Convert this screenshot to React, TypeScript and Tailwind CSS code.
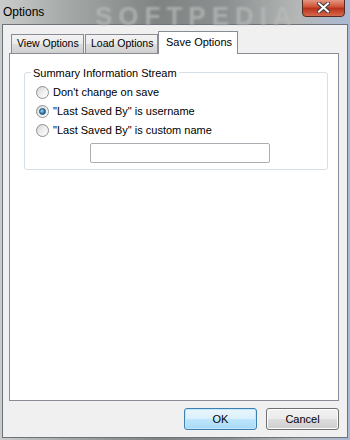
import { useState } from "react";

const font = { fontFamily: '"Liberation Sans", Arial, sans-serif' };

function Radio({ checked, label, onClick }: { checked: boolean; label: string; onClick: () => void }) {
  return (
    <button onClick={onClick} className="flex h-[19px] items-center gap-[4px] text-left">
      <span className="flex h-[13px] w-[13px] items-center justify-center rounded-full border border-[#8e8f8f] bg-gradient-to-br from-[#d4d4d4] via-[#eeeeee] to-[#ffffff]">
        {checked && (
          <span className="h-[7px] w-[7px] rounded-full border border-[#1e4f74] bg-[radial-gradient(circle_at_35%_35%,#9ad8f8,#2c79b0_60%,#1b4d74)]" />
        )}
      </span>
      <span className="text-[11px] text-black">{label}</span>
    </button>
  );
}

export default function App() {
  const [tab, setTab] = useState(2);
  const [mode, setMode] = useState(1);
  const tabs = ["View Options", "Load Options", "Save Options"];

  return (
    <div
      className="flex h-[440px] w-[350px] flex-col overflow-hidden bg-[linear-gradient(90deg,#c9cccb_0%,#a3a7a6_20%,#7f8483_45%,#8c9090_65%,#b4b7b6_85%,#a9b9d4_100%)]"
      style={font}
    >
      {/* Title bar */}
      <div className="relative flex h-[24px] shrink-0 items-center pl-[3px]">
        <span className="relative z-10 text-[12px] text-black">Options</span>
        <span className="pointer-events-none absolute left-[95px] top-[-3px] select-none text-[26px] font-bold tracking-[6px] text-[#b9bcbb] opacity-70 blur-[1px]">
          SOFTPEDIA
        </span>
        <button className="absolute right-[5px] top-[-2px] flex h-[19px] w-[43px] items-center justify-center rounded-b-[4px] border border-[#5a2a20] bg-[linear-gradient(180deg,#e8a08c_0%,#d0553a_45%,#b8321a_55%,#d46a4c_100%)]">
          <svg width="13" height="11" viewBox="0 0 13 11">
            <path d="M2 1.5 L11 9.5 M11 1.5 L2 9.5" stroke="#3b3b3b" strokeWidth="4" strokeLinecap="square" />
            <path d="M2 1.5 L11 9.5 M11 1.5 L2 9.5" stroke="#ffffff" strokeWidth="2" strokeLinecap="square" />
          </svg>
        </button>
      </div>

      {/* Client area */}
      <div className="mx-[2px] mb-[2px] flex flex-1 flex-col border border-[#6e737a] bg-[#f0f0f0] pl-[6px] pr-[8px] pt-[6px]">
        {/* Tabs */}
        <div className="flex h-[22px] items-end pl-[2px]">
          {tabs.map((t, i) =>
            i === tab ? (
              <button
                key={t}
                onClick={() => setTab(i)}
                className="relative z-10 mb-[-1px] -ml-[1px] flex h-[23px] w-[80px] items-start whitespace-nowrap border border-b-0 border-[#898c95] bg-white pl-[7px] pt-[2px] text-[11px] text-black"
              >
                {t}
              </button>
            ) : (
              <button
                key={t}
                onClick={() => setTab(i)}
                className="mr-[1px] flex h-[19px] w-[73px] items-center whitespace-nowrap border border-b-0 border-[#898c95] bg-[linear-gradient(180deg,#f3f3f3_0%,#ebebeb_50%,#dddddd_51%,#cfcfcf_100%)] pl-[5px] text-[10.5px] text-black"
              >
                {t}
              </button>
            )
          )}
        </div>

        {/* Panel */}
        <div className="flex h-[348px] flex-col border border-[#898c95] bg-white pl-[14px] pr-[10px] pt-[18px]">
          <div className="relative h-[98px] rounded-[3px] border border-[#d5dfe5] pl-[11px] pt-[10px]">
            <span className="absolute left-[6px] top-[-8px] bg-white px-[2px] text-[11px] text-black">
              Summary Information Stream
            </span>
            <div className="flex flex-col">
              <Radio checked={mode === 0} label="Don't change on save" onClick={() => setMode(0)} />
              <Radio checked={mode === 1} label={'"Last Saved By" is username'} onClick={() => setMode(1)} />
              <Radio checked={mode === 2} label={'"Last Saved By" is custom name'} onClick={() => setMode(2)} />
            </div>
            <input
              className="ml-[54px] mt-[2px] h-[20px] w-[180px] rounded-[2px] border border-[#abadb3] bg-white px-[3px] text-[11px] outline-none"
              style={font}
            />
          </div>
        </div>

        {/* Buttons */}
        <div className="flex justify-end gap-[9px] pt-[7px]">
          <button className="h-[22px] w-[73px] rounded-[3px] border border-[#3c7fb1] bg-[linear-gradient(180deg,#eaf6fd_0%,#d9f0fc_50%,#bee6fd_51%,#a7d9f5_100%)] text-[11px] text-black shadow-[inset_0_0_0_1px_#c6e6f7]">
            OK
          </button>
          <button className="h-[22px] w-[73px] rounded-[3px] border border-[#707070] bg-[linear-gradient(180deg,#f2f2f2_0%,#ebebeb_50%,#dddddd_51%,#cfcfcf_100%)] text-[11px] text-black shadow-[inset_0_0_0_1px_#fcfcfc]">
            Cancel
          </button>
        </div>
      </div>
    </div>
  );
}
